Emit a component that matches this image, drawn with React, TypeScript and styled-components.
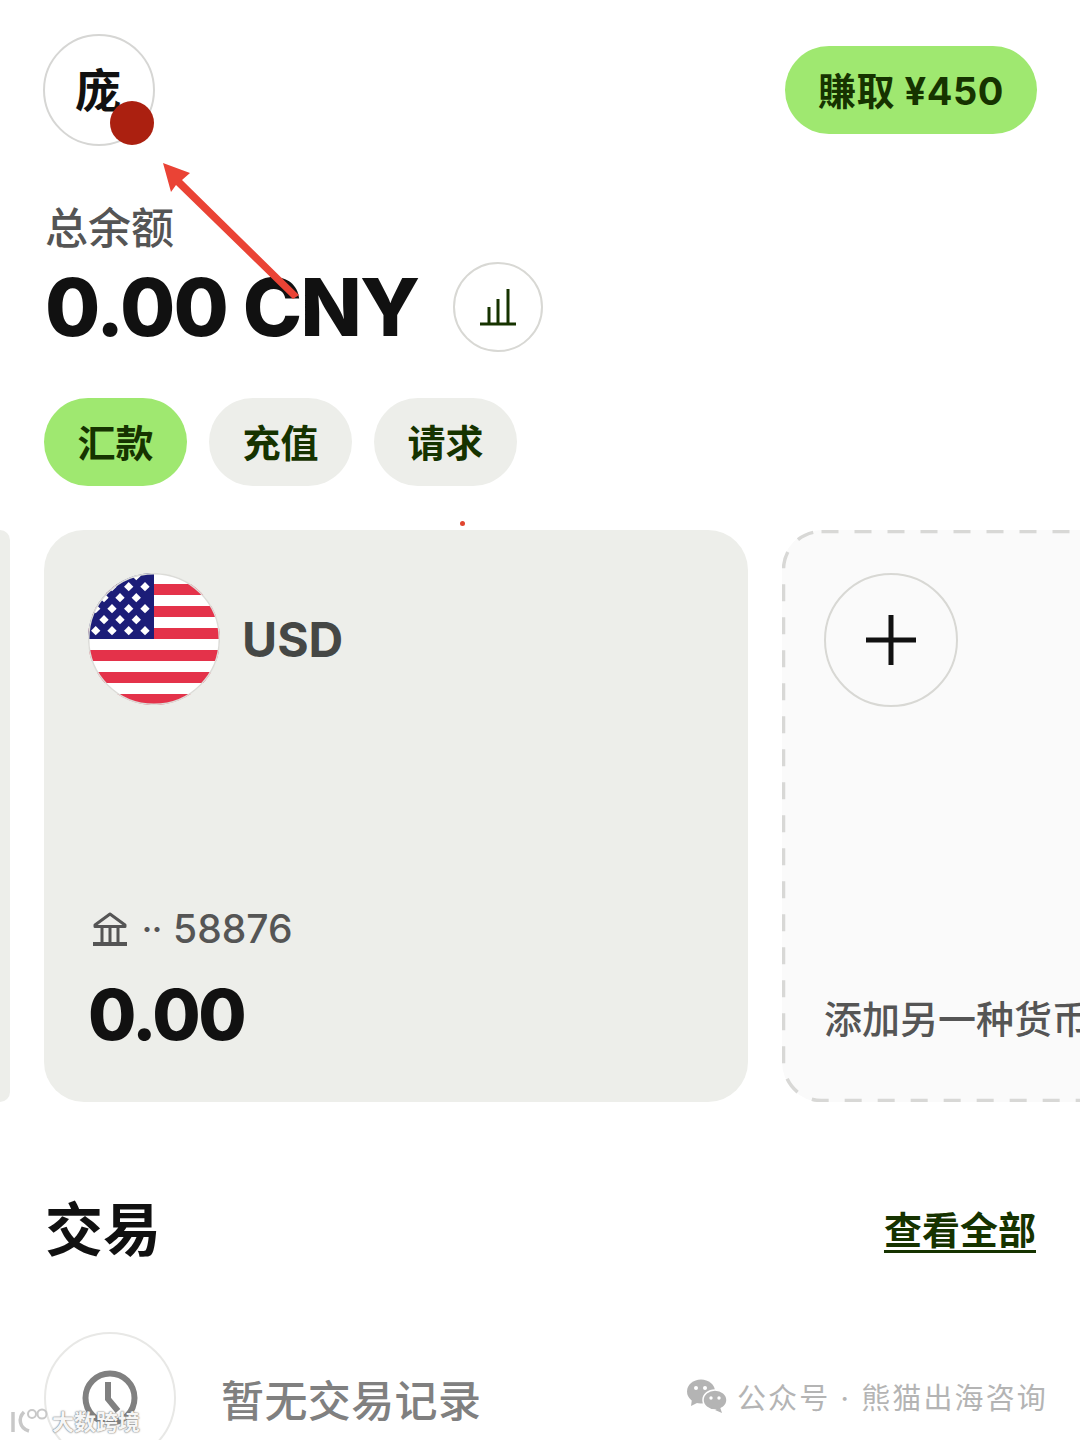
import styled, { createGlobalStyle } from 'styled-components';

const GlobalStyle = createGlobalStyle`
  html, body {
    margin: 0;
    padding: 0;
    background: #fff;
  }
  * {
    box-sizing: border-box;
  }
`;

const FONT = `Inter, "Noto Sans CJK SC", sans-serif`;

const Page = styled.div`
  position: relative;
  width: 1080px;
  height: 1440px;
  overflow: hidden;
  background: #fff;
  font-family: ${FONT};
  color: #111;
`;

const TopBar = styled.header`
  display: flex;
  justify-content: space-between;
  align-items: flex-start;
  padding: 34px 43px 0 43px;
  height: 200px;
`;

const Avatar = styled.div`
  position: relative;
  width: 112px;
  height: 112px;
  border: 2px solid #d6d6d4;
  border-radius: 50%;
  display: flex;
  align-items: center;
  justify-content: center;
  font-size: 46px;
  font-weight: 700;
  padding: 0 2px 6px 0;
`;

const RedDot = styled.span`
  position: absolute;
  right: -1px;
  bottom: -1px;
  width: 44px;
  height: 44px;
  border-radius: 50%;
  background: #ab2010;
`;

const EarnButton = styled.button`
  margin-top: 12px;
  width: 252px;
  height: 88px;
  border: none;
  border-radius: 44px;
  background: #9fe870;
  color: #163300;
  font-family: ${FONT};
  font-size: 38px;
  font-weight: 700;
  letter-spacing: 0.5px;
  white-space: nowrap;
  padding: 0 0 4px;
`;

const Balance = styled.section`
  padding-left: 45px;
`;

const BalanceLabel = styled.div`
  font-size: 43px;
  line-height: 56px;
  font-weight: 500;
  color: #555;
`;

const BalanceRow = styled.div`
  display: flex;
  align-items: center;
  gap: 34px;
  height: 90px;
  margin-top: 6px;
`;

const BalanceValue = styled.div`
  width: 374px;
  font-size: 80px;
  font-weight: 800;
  letter-spacing: -1.8px;
  line-height: 90px;
  white-space: nowrap;
`;

const CircleButton = styled.div<{ $size: number }>`
  flex: none;
  width: ${(p) => p.$size}px;
  height: ${(p) => p.$size}px;
  border: 2px solid #d8d8d4;
  border-radius: 50%;
  display: flex;
  align-items: center;
  justify-content: center;
`;

const Actions = styled.div`
  display: flex;
  gap: 22px;
  padding: 46px 0 0 44px;
`;

const ActionPill = styled.button<{ $primary?: boolean }>`
  width: 143px;
  height: 88px;
  border: none;
  border-radius: 44px;
  padding: 0 0 4px;
  background: ${(p) => (p.$primary ? '#9fe870' : '#edeeea')};
  color: #163300;
  font-family: ${FONT};
  font-size: 38px;
  font-weight: 600;
`;

const CardStrip = styled.div`
  display: flex;
  gap: 34px;
  height: 572px;
  margin-top: 44px;
`;

const PrevCard = styled.div`
  flex: none;
  width: 10px;
  background: #edeeea;
  border-radius: 0 14px 14px 0;
`;

const AccountCard = styled.div`
  flex: none;
  width: 704px;
  padding: 43px 44px 45px 44px;
  border-radius: 40px;
  background: #edeeea;
  display: flex;
  flex-direction: column;
`;

const CurrencyRow = styled.div`
  display: flex;
  gap: 22px;
  flex: 1;
  align-items: flex-start;
`;

const CurrencyCode = styled.div`
  font-size: 48px;
  font-weight: 700;
  color: #454745;
  line-height: 134px;
`;

const AccountRow = styled.div`
  display: flex;
  align-items: center;
  gap: 14px;
  color: #555;
  font-size: 39px;
  font-weight: 500;
  line-height: 46px;
  padding-left: 4px;
`;

const Dots = styled.span`
  font-size: 30px;
  font-weight: 700;
  margin-right: -3px;
`;

const AccountAmount = styled.div`
  font-size: 70px;
  font-weight: 800;
  line-height: 84px;
  margin-top: 21px;
  letter-spacing: -2.3px;
`;

const AddCard = styled.div`
  position: relative;
  flex: none;
  width: 420px;
  padding: 43px 0 58px 42px;
  border-radius: 40px;
  background: #fafafa;
  display: flex;
  flex-direction: column;
  justify-content: space-between;
`;

const DashedEdge = styled.svg`
  position: absolute;
  left: 0;
  top: 0;
`;

const AddLabel = styled.div`
  font-size: 38px;
  font-weight: 500;
  line-height: 50px;
  color: #555;
  white-space: nowrap;
`;

const TransactionsHead = styled.div`
  display: flex;
  justify-content: space-between;
  align-items: center;
  padding: 88px 44px 0 45px;
`;

const SectionTitle = styled.h2`
  margin: 0;
  font-size: 58px;
  line-height: 80px;
  font-weight: 700;
`;

const ViewAll = styled.a`
  font-size: 38px;
  font-weight: 600;
  color: #163300;
  line-height: 46px;
  text-decoration: underline;
  text-underline-offset: 6px;
  text-decoration-thickness: 3px;
`;

const EmptyRow = styled.div`
  display: flex;
  align-items: center;
  gap: 45px;
  padding: 62px 0 0 44px;
`;

const ClockCircle = styled(CircleButton)`
  border-color: #e8e8e6;
`;

const EmptyText = styled.div`
  font-size: 43px;
  letter-spacing: 0.4px;
  font-weight: 500;
  color: #808080;
  white-space: nowrap;
`;

const Arrow = styled.svg`
  position: absolute;
  left: 150px;
  top: 150px;
`;

const RedSpeck = styled.span`
  position: absolute;
  left: 460px;
  top: 521px;
  width: 5px;
  height: 5px;
  border-radius: 50%;
  background: #e0452f;
`;

const WatermarkRight = styled.div`
  position: absolute;
  left: 687px;
  top: 1375px;
  display: flex;
  align-items: center;
  gap: 10px;
  font-size: 29px;
  letter-spacing: 2.1px;
  color: #b4b4b4;
  white-space: nowrap;
`;

const WatermarkLeft = styled.div`
  position: absolute;
  left: 9px;
  top: 1404px;
  display: flex;
  align-items: center;
  gap: 3px;
  font-size: 22px;
  font-weight: 700;
  color: #f6f6f6;
  text-shadow: 0 0 2px #777, 0 0 1px #777;
  white-space: nowrap;
`;

const FLAG_STARS: [number, number[]][] = [
  [2.7, [48.3]],
  [13.7, [24, 40.7, 57]],
  [24.7, [16, 32, 48.3]],
  [35.7, [7.7, 24, 40.7, 57]],
  [46.7, [16, 32, 48.3]],
  [57.7, [7.7, 24, 40.7, 57]],
];

function UsFlag() {
  const redStripes = [1, 3, 5, 7, 9, 11];
  return (
    <svg width="132" height="132" viewBox="0 0 132 132">
      <defs>
        <clipPath id="flagClip">
          <circle cx="66" cy="66" r="66" />
        </clipPath>
      </defs>
      <g clipPath="url(#flagClip)">
        <rect width="132" height="132" fill="#fff" />
        {redStripes.map((i) => (
          <rect key={i} x="0" y={i * 11} width="132" height="11" fill="#e4324a" />
        ))}
        <rect x="0" y="0" width="66" height="66" fill="#1c1d78" />
        {FLAG_STARS.flatMap(([y, xs]) =>
          xs.map((x) => (
            <rect
              key={`${x}-${y}`}
              x={x - 3.3}
              y={y - 3.3}
              width="6.6"
              height="6.6"
              fill="#fff"
              transform={`rotate(45 ${x} ${y})`}
            />
          ))
        )}
      </g>
      <circle cx="66" cy="66" r="65.3" fill="none" stroke="#dcdcd8" strokeWidth="1.5" />
    </svg>
  );
}

function BankIcon() {
  return (
    <svg width="36" height="36" viewBox="0 0 36 36" fill="none" stroke="#555" strokeWidth="3">
      <path d="M3 14 18 3l15 11v1.5H3z" strokeLinejoin="round" />
      <path d="M10 16v15M18 16v15M26 16v15" />
      <path d="M1 33h34" strokeWidth="4" />
    </svg>
  );
}

function ClockIcon() {
  return (
    <svg width="56" height="56" viewBox="0 0 56 56" fill="none" stroke="#808080" strokeWidth="6">
      <circle cx="28" cy="28" r="24.5" />
      <path d="M26 12v17l10 12" />
    </svg>
  );
}

function WeChatIcon() {
  return (
    <svg width="40" height="34" viewBox="0 0 40 34" fill="#b4b4b4">
      <ellipse cx="14" cy="12.5" rx="14" ry="12" />
      <path d="M5 20l-1 7 8-4z" />
      <ellipse cx="28" cy="21" rx="12" ry="10" stroke="#fff" strokeWidth="1.5" />
      <path d="M33 28l2 6-7-3z" />
      <circle cx="9" cy="9" r="2" fill="#fff" />
      <circle cx="18" cy="9" r="2" fill="#fff" />
      <circle cx="24" cy="19" r="1.7" fill="#fff" />
      <circle cx="32" cy="19" r="1.7" fill="#fff" />
    </svg>
  );
}

function SiteLogo() {
  return (
    <svg width="40" height="28" viewBox="0 0 40 28" fill="none" stroke="#c8c8c8" strokeWidth="3.5">
      <path d="M4 6v20" />
      <path d="M15 6C9 12 10 22 20 25" />
      <circle cx="23" cy="8" r="4" strokeWidth="2" />
      <circle cx="33" cy="8" r="4.5" strokeWidth="2" />
    </svg>
  );
}

export default function App() {
  return (
    <Page>
      <GlobalStyle />
      <TopBar>
        <Avatar>
          庞
          <RedDot />
        </Avatar>
        <EarnButton>賺取 ¥450</EarnButton>
      </TopBar>

      <Balance>
        <BalanceLabel>总余额</BalanceLabel>
        <BalanceRow>
          <BalanceValue>0.00 CNY</BalanceValue>
          <CircleButton $size={90}>
            <svg width="38" height="38" viewBox="0 0 38 38" fill="none" stroke="#163300" strokeWidth="3">
              <path d="M1 36h36M10 36V19M19 36V11M29 36V1" />
            </svg>
          </CircleButton>
        </BalanceRow>
      </Balance>

      <Actions>
        <ActionPill $primary>汇款</ActionPill>
        <ActionPill>充值</ActionPill>
        <ActionPill>请求</ActionPill>
      </Actions>

      <CardStrip>
        <PrevCard />
        <AccountCard>
          <CurrencyRow>
            <UsFlag />
            <CurrencyCode>USD</CurrencyCode>
          </CurrencyRow>
          <AccountRow>
            <BankIcon />
            <Dots>··</Dots>
            58876
          </AccountRow>
          <AccountAmount>0.00</AccountAmount>
        </AccountCard>
        <AddCard>
          <DashedEdge width="420" height="572" viewBox="0 0 420 572">
            <rect
              x="1.5"
              y="1.5"
              width="417"
              height="569"
              rx="38"
              fill="none"
              stroke="#d8d8d6"
              strokeWidth="3.5"
              strokeDasharray="17 16"
            />
          </DashedEdge>
          <CircleButton $size={134}>
            <svg width="50" height="50" viewBox="0 0 50 50" stroke="#111" strokeWidth="5">
              <path d="M25 0v50M0 25h50" />
            </svg>
          </CircleButton>
          <AddLabel>添加另一种货币</AddLabel>
        </AddCard>
      </CardStrip>

      <TransactionsHead>
        <SectionTitle>交易</SectionTitle>
        <ViewAll>查看全部</ViewAll>
      </TransactionsHead>

      <EmptyRow>
        <ClockCircle $size={132}>
          <ClockIcon />
        </ClockCircle>
        <EmptyText>暂无交易记录</EmptyText>
      </EmptyRow>

      <Arrow width="160" height="150" viewBox="0 0 160 150">
        <path d="M13 13 40 23 32 30 149 145 143 149 26 35 21 42z" fill="#ea4335" />
      </Arrow>
      <RedSpeck />

      <WatermarkRight>
        <WeChatIcon />
        公众号 · 熊猫出海咨询
      </WatermarkRight>
      <WatermarkLeft>
        <SiteLogo />
        大数跨境
      </WatermarkLeft>
    </Page>
  );
}
